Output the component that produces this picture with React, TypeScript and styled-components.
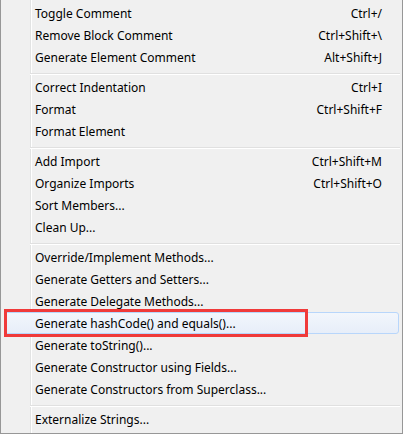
import { createGlobalStyle } from 'styled-components';
import styled from 'styled-components';

const GlobalStyle = createGlobalStyle`
  html, body {
    margin: 0;
    padding: 0;
    background: #ffffff;
  }
  body {
    font-family: 'Noto Sans', 'Open Sans', sans-serif;
    font-size: 12px;
    color: #000;
  }
`;

const Menu = styled.div`
  position: relative;
  width: 403px;
  box-sizing: border-box;
  padding: 2px 0 3px;
  border: 1px solid #979797;
  border-top: none;
  display: flex;
  flex-direction: column;
  background: linear-gradient(
    to right,
    #f0f0f0 0,
    #f0f0f0 29px,
    #e2e3e3 29px,
    #e2e3e3 30px,
    #ffffff 30px,
    #ffffff 31px,
    #f0f0f0 31px
  );
`;

const Row = styled.div<{ $hot?: boolean }>`
  position: relative;
  height: 22px;
  margin: 0 3px;
  padding: 0 16px 0 30px;
  box-sizing: border-box;
  display: flex;
  align-items: center;
  justify-content: space-between;
  white-space: nowrap;
  border: 1px solid ${(p) => (p.$hot ? '#b8d6fb' : 'transparent')};
  border-radius: 3px;
  background: ${(p) =>
    p.$hot ? 'linear-gradient(to bottom, #f2f6fc 0%, #e7eef9 100%)' : 'transparent'};
`;

const Label = styled.span`
  color: #000;
`;

const Shortcut = styled.span`
  color: #000;
`;

const Separator = styled.div`
  height: 8px;
  margin-left: 29px;
  margin-right: 2px;
  box-sizing: border-box;
  padding-top: 5px;
`;

const SeparatorLine = styled.div`
  height: 1px;
  background: #e0e0e0;
  border-bottom: 1px solid #ffffff;
`;

const Annotation = styled.div`
  position: absolute;
  left: -1px;
  top: -4px;
  width: 304px;
  height: 28px;
  box-sizing: border-box;
  border: 3.5px solid #f03a3a;
  pointer-events: none;
`;

type Item = { label: string; shortcut?: string; hot?: boolean };

const groups: Item[][] = [
  [
    { label: 'Toggle Comment', shortcut: 'Ctrl+/' },
    { label: 'Remove Block Comment', shortcut: 'Ctrl+Shift+\\' },
    { label: 'Generate Element Comment', shortcut: 'Alt+Shift+J' },
  ],
  [
    { label: 'Correct Indentation', shortcut: 'Ctrl+I' },
    { label: 'Format', shortcut: 'Ctrl+Shift+F' },
    { label: 'Format Element' },
  ],
  [
    { label: 'Add Import', shortcut: 'Ctrl+Shift+M' },
    { label: 'Organize Imports', shortcut: 'Ctrl+Shift+O' },
    { label: 'Sort Members...' },
    { label: 'Clean Up...' },
  ],
  [
    { label: 'Override/Implement Methods...' },
    { label: 'Generate Getters and Setters...' },
    { label: 'Generate Delegate Methods...' },
    { label: 'Generate hashCode() and equals()...', hot: true },
    { label: 'Generate toString()...' },
    { label: 'Generate Constructor using Fields...' },
    { label: 'Generate Constructors from Superclass...' },
  ],
  [{ label: 'Externalize Strings...' }],
];

function App() {
  return (
    <>
      <GlobalStyle />
      <Menu>
        {groups.map((group, gi) => (
          <div key={gi}>
            {gi > 0 && (
              <Separator>
                <SeparatorLine />
              </Separator>
            )}
            {group.map((item) => (
              <Row key={item.label} $hot={item.hot}>
                <Label>{item.label}</Label>
                {item.shortcut && <Shortcut>{item.shortcut}</Shortcut>}
                {item.hot && <Annotation />}
              </Row>
            ))}
          </div>
        ))}
      </Menu>
    </>
  );
}

export default App;
